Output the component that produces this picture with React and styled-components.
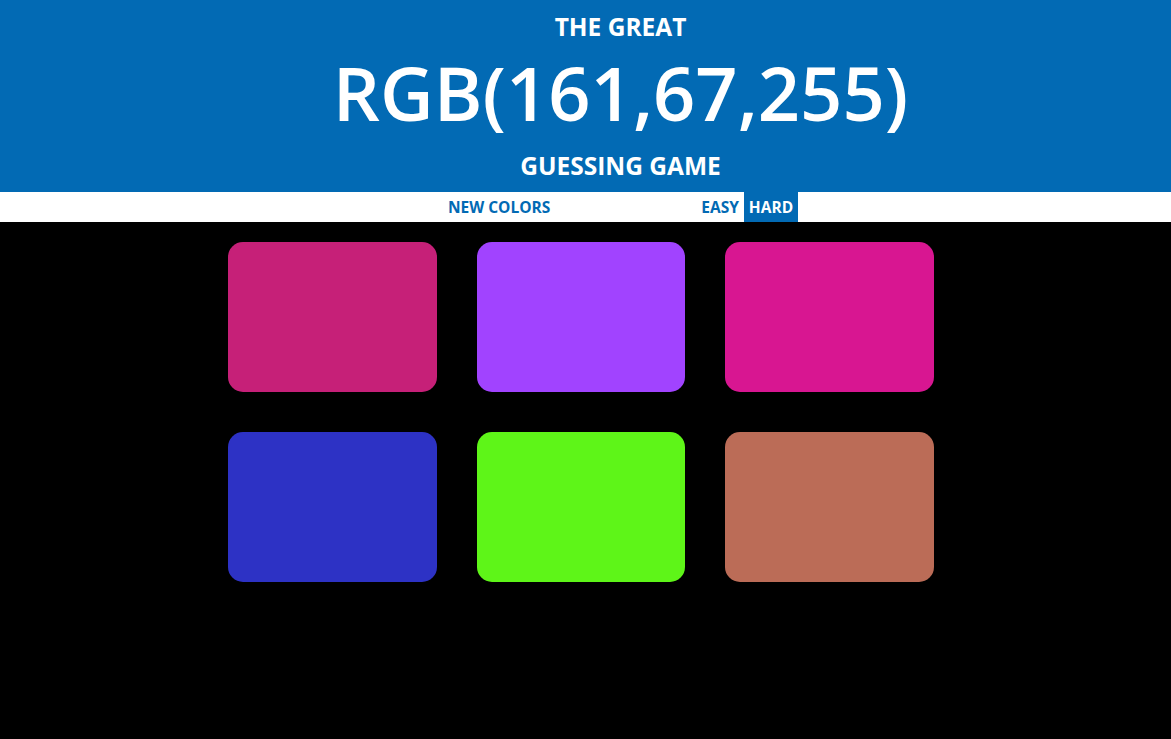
import React from "react";
import styled, { createGlobalStyle } from "styled-components";

const Global = createGlobalStyle`
  html, body { margin: 0; padding: 0; background: #000; }
  body { font-family: "Open Sans", "Noto Sans", sans-serif; }
`;

const BLUE = "#026ab4";

const Header = styled.header`
  background: ${BLUE};
  color: #fff;
  height: 192px;
  box-sizing: border-box;
  padding-left: 70px;
  display: flex;
  flex-direction: column;
  align-items: center;
  text-transform: uppercase;
`;

const Small = styled.div`
  font-size: 24.5px;
  font-weight: 700;
  line-height: 1;
  margin-top: ${(p) => p.$top}px;
`;

const Big = styled.div`
  font-size: 74px;
  font-weight: 600;
  line-height: 1;
  margin-top: 16px;
`;

const Stripe = styled.nav`
  background: #fff;
  height: 30px;
  display: flex;
  justify-content: center;
  padding-left: 70px;
`;

const Btn = styled.button`
  border: none;
  outline: none;
  height: 100%;
  margin: 0;
  padding: 0 5px;
  background: ${(p) => (p.$selected ? BLUE : "transparent")};
  color: ${(p) => (p.$selected ? "#fff" : BLUE)};
  font-family: inherit;
  font-size: 15.5px;
  font-weight: 700;
  text-transform: uppercase;
  cursor: pointer;
`;

const Message = styled.span`
  display: inline-block;
  width: 141px;
`;

const Grid = styled.main`
  display: grid;
  grid-template-columns: repeat(3, 208.5px);
  grid-auto-rows: 150px;
  column-gap: 40px;
  row-gap: 40px;
  margin: 20px 0 0 228px;
`;

const Square = styled.div`
  border-radius: 15px;
  background: ${(p) => p.$color};
`;

const colors = [
  "rgb(198,32,120)",
  "rgb(161,67,255)",
  "rgb(216,22,145)",
  "rgb(45,50,197)",
  "rgb(94,245,24)",
  "rgb(187,108,87)",
];

export default function App() {
  return (
    <>
      <Global />
      <Header>
        <Small $top={15}>The Great</Small>
        <Big>RGB(161,67,255)</Big>
        <Small $top={24}>Guessing Game</Small>
      </Header>
      <Stripe>
        <Btn>New Colors</Btn>
        <Message />
        <Btn>Easy</Btn>
        <Btn $selected>Hard</Btn>
      </Stripe>
      <Grid>
        {colors.map((c) => (
          <Square key={c} $color={c} />
        ))}
      </Grid>
    </>
  );
}
